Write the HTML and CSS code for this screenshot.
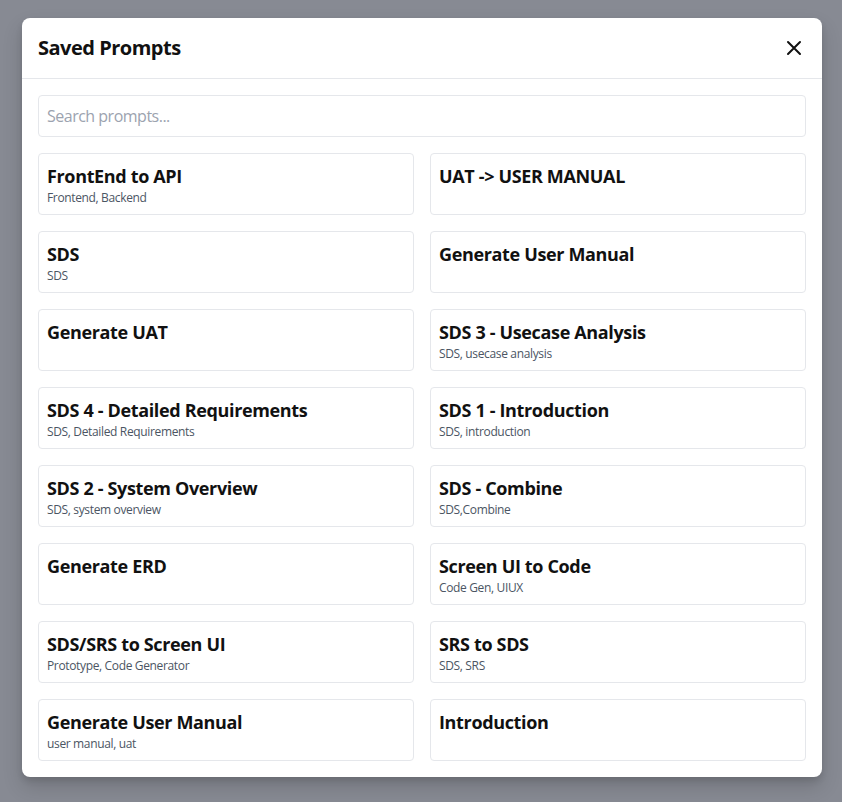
FILE: index.html
```html
<!DOCTYPE html>
<html lang="en">
<head>
<meta charset="utf-8">
<title>Saved Prompts</title>
<link rel="stylesheet" href="styles.css">
</head>
<body>
<div class="overlay">
  <div class="modal">
    <div class="modal-header">
      <h2 class="modal-title">Saved Prompts</h2>
      <button class="close-btn" aria-label="Close">
        <svg width="24" height="24" viewBox="0 0 24 24" fill="none" stroke="currentColor" stroke-width="2" stroke-linecap="round"><path d="M6 6l12 12M18 6L6 18"/></svg>
      </button>
    </div>
    <div class="modal-body">
      <input class="search" type="text" placeholder="Search prompts...">
      <div class="grid">
        <div class="card"><div class="card-title">FrontEnd to API</div><div class="card-tags">Frontend, Backend</div></div>
        <div class="card"><div class="card-title">UAT -&gt; USER MANUAL</div></div>
        <div class="card"><div class="card-title">SDS</div><div class="card-tags">SDS</div></div>
        <div class="card"><div class="card-title">Generate User Manual</div></div>
        <div class="card"><div class="card-title">Generate UAT</div></div>
        <div class="card"><div class="card-title">SDS 3 - Usecase Analysis</div><div class="card-tags">SDS, usecase analysis</div></div>
        <div class="card"><div class="card-title">SDS 4 - Detailed Requirements</div><div class="card-tags">SDS, Detailed Requirements</div></div>
        <div class="card"><div class="card-title">SDS 1 - Introduction</div><div class="card-tags">SDS, introduction</div></div>
        <div class="card"><div class="card-title">SDS 2 - System Overview</div><div class="card-tags">SDS, system overview</div></div>
        <div class="card"><div class="card-title">SDS - Combine</div><div class="card-tags">SDS,Combine</div></div>
        <div class="card"><div class="card-title">Generate ERD</div></div>
        <div class="card"><div class="card-title">Screen UI to Code</div><div class="card-tags">Code Gen, UIUX</div></div>
        <div class="card"><div class="card-title">SDS/SRS to Screen UI</div><div class="card-tags">Prototype, Code Generator</div></div>
        <div class="card"><div class="card-title">SRS to SDS</div><div class="card-tags">SDS, SRS</div></div>
        <div class="card"><div class="card-title">Generate User Manual</div><div class="card-tags">user manual, uat</div></div>
        <div class="card"><div class="card-title">Introduction</div></div>
      </div>
    </div>
  </div>
</div>
</body>
</html>
```
FILE: styles.css
```css
* { box-sizing: border-box; }
html, body { margin: 0; padding: 0; height: 100%; }
body {
  font-family: "Open Sans", "Noto Sans", sans-serif;
  color: #111;
  background: #878a93;
}
.overlay {
  min-height: 100%;
  padding: 18px 20px 0 22px;
  display: flex;
  align-items: flex-start;
}
.modal {
  width: 800px;
  background: #fff;
  border-radius: 8px;
  box-shadow: 0 10px 20px rgba(0,0,0,0.15), 0 4px 6px rgba(0,0,0,0.1);
}
.modal-header {
  display: flex;
  align-items: center;
  justify-content: space-between;
  padding: 16px;
  border-bottom: 1px solid #e5e7eb;
}
.modal-title {
  margin: 0;
  font-size: 20px;
  line-height: 28px;
  font-weight: 700;
  letter-spacing: -0.5px;
  color: #111;
}
.close-btn {
  border: 0;
  background: none;
  padding: 0;
  width: 24px;
  height: 24px;
  color: #111;
  display: flex;
  align-items: center;
  justify-content: center;
  cursor: pointer;
}
.modal-body {
  padding: 16px;
}
.search {
  display: block;
  width: 100%;
  height: 42px;
  border: 1px solid #e5e7eb;
  border-radius: 4px;
  padding: 0 8px;
  font-family: inherit;
  font-size: 16px;
  letter-spacing: -0.5px;
  color: #111;
  outline: none;
}
.search::placeholder { color: #9ca3af; }
.grid {
  margin-top: 16px;
  display: grid;
  grid-template-columns: 1fr 1fr;
  gap: 16px;
}
.card {
  border: 1px solid #e5e7eb;
  border-radius: 4px;
  padding: 8px;
  min-height: 62px;
}
.card-title {
  font-size: 18px;
  line-height: 28px;
  font-weight: 700;
  letter-spacing: -0.35px;
  color: #111;
}
.card-tags {
  font-size: 12px;
  line-height: 16px;
  letter-spacing: -0.35px;
  color: #4b5563;
}
```
